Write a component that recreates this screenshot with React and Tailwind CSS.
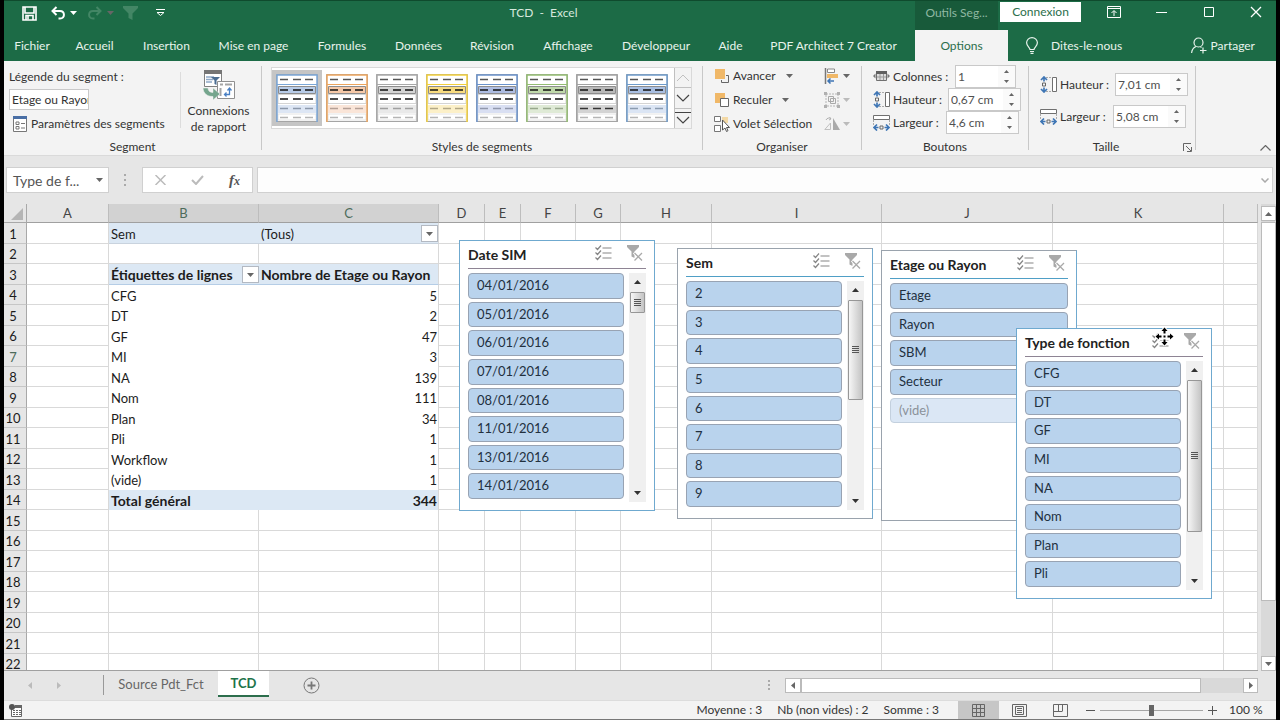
import React from 'react';
import clsx from 'clsx';

const TABS = [
  { name: 'Fichier', width: 'w-[56px]' },
  { name: 'Accueil', width: 'w-[69px]' },
  { name: 'Insertion', width: 'w-[75px]' },
  { name: 'Mise en page', width: 'w-[99px]' },
  { name: 'Formules', width: 'w-[78px]' },
  { name: 'Données', width: 'w-[75px]' },
  { name: 'Révision', width: 'w-[72px]' },
  { name: 'Affichage', width: 'w-[80px]' },
  { name: 'Développeur', width: 'w-[96px]' },
  { name: 'Aide', width: 'w-[53px]' },
  { name: 'PDF Architect 7 Creator', width: 'w-[153px]' },
];

const STYLES = [
  { edge: '#7ba7d7', head: '#b8cce8', soft: '#dde6f4', fourth: '#8d99ab' },
  { edge: '#eda55d', head: '#f6c9a8', soft: '#fae5d8', fourth: '#b5a197' },
  { edge: '#a9a9a9', head: '#d5d5d5', soft: '#e9e9e9', fourth: '#a0a0a0' },
  { edge: '#f2cf3c', head: '#f9dc80', soft: '#fcf0c8', fourth: '#b3a988' },
  { edge: '#6b93cc', head: '#aebde2', soft: '#d9dff2', fourth: '#9299ad' },
  { edge: '#94bd72', head: '#c0d9ab', soft: '#dfead6', fourth: '#98a88d' },
  { edge: '#a3a3a3', head: '#b9b9b9', soft: '#d3d3d3', fourth: '#333333' },
  { edge: '#6f9ccb', head: '#a9bfe2', soft: '#dbe5f4', fourth: '#8b9cb0' },
];

const COLUMNS = [
  { name: 'A', width: 'w-[82px]' },
  { name: 'B', width: 'w-[150px]' },
  { name: 'C', width: 'w-[180px]' },
  { name: 'D', width: 'w-[46px]' },
  { name: 'E', width: 'w-[36px]' },
  { name: 'F', width: 'w-[55px]' },
  { name: 'G', width: 'w-[45px]' },
  { name: 'H', width: 'w-[91px]' },
  { name: 'I', width: 'w-[170px]' },
  { name: 'J', width: 'w-[171px]' },
  { name: 'K', width: 'w-[171px]' },
  { name: '', width: '' },
];

const PIVOT = {
  1: { B: 'Sem', C: '(Tous)' },
  3: { B: 'Étiquettes de lignes', C: 'Nombre de Etage ou Rayon' },
  4: { B: 'CFG', C: '5' },
  5: { B: 'DT', C: '2' },
  6: { B: 'GF', C: '47' },
  7: { B: 'MI', C: '3' },
  8: { B: 'NA', C: '139' },
  9: { B: 'Nom', C: '111' },
  10: { B: 'Plan', C: '34' },
  11: { B: 'Pli', C: '1' },
  12: { B: 'Workflow', C: '1' },
  13: { B: '(vide)', C: '1' },
  14: { B: 'Total général', C: '344' },
};

const ROWS = Array.from({ length: 22 }, (_, i) => i + 1);

/* ---------- small drawings ---------- */

function Caret({ className = 'text-[#666]' }) {
  return (
    <svg width="7" height="4" viewBox="0 0 7 4" className={clsx('shrink-0', className)}>
      <path d="M0 0h7L3.5 4z" fill="currentColor" />
    </svg>
  );
}

function CaretUp({ className = 'text-[#666]' }) {
  return (
    <svg width="7" height="4" viewBox="0 0 7 4" className={clsx('shrink-0', className)}>
      <path d="M0 4h7L3.5 0z" fill="currentColor" />
    </svg>
  );
}

function SaveIcon() {
  return (
    <svg width="15" height="15" viewBox="0 0 15 15" fill="none" stroke="#fff" strokeWidth="1.6">
      <path d="M1 1h13v13H1z" />
      <path d="M3 1v6h9V1M4 14v-4.500h7V14" />
      <path d="M6 10v3.5" />
    </svg>
  );
}

function UndoIcon({ flip, className }) {
  return (
    <svg width="15" height="14" viewBox="0 0 15 14" fill="none" stroke="currentColor" strokeWidth="2" className={clsx(className, flip && '-scale-x-100')}>
      <path d="M5.5 1L1.5 5l4 4" />
      <path d="M1.5 5H9c5 0 5.500 7.500 0 7.500H7.500" />
    </svg>
  );
}

function FunnelIcon({ className }) {
  return (
    <svg width="15" height="14" viewBox="0 0 15 14" className={className}>
      <path d="M0 0h15v2L9.500 7.500V14l-4-2V7.500L0 2z" fill="currentColor" />
    </svg>
  );
}

function ClearFilterIcon() {
  return (
    <svg width="16" height="16" viewBox="0 0 16 16" fill="none">
      <path d="M0 0h12v2L7.500 6.500V13l-3-1.500v-5L0 2z" fill="#a9a9a9" />
      <path d="M7 7.500l8 8M15 7.500l-8 8" stroke="#fff" strokeWidth="3" />
      <path d="M7.500 8l7.500 7.500M15 8l-7.500 7.500" stroke="#a9a9a9" strokeWidth="1.300" />
    </svg>
  );
}

function MultiSelectIcon() {
  return (
    <svg width="17" height="16" viewBox="0 0 17 16" fill="none" stroke="#858585" strokeWidth="1.200">
      <path d="M0.500 2.500l2 2L6 0.500M0.500 7.500l2 2L6 5.500M0.500 12.500l2 2L6 10.500" />
      <path d="M7.500 3H16.500M7.500 8H16.500M7.500 13H16.500" />
    </svg>
  );
}

function MoveCursor() {
  return (
    <svg width="19" height="19" viewBox="0 0 19 19" className="absolute -top-[2px] left-[138px]">
      <path d="M9.500 .5l3 3.500h-2v2.500h-2V4h-2zM9.500 18.500l3-3.500h-2v-2.500h-2V15h-2zM.5 9.500L4 6.500v2h2.500v2H4v2zM18.500 9.500L15 6.500v2h-2.500v2H15v2zM8.500 8.500h2v2h-2z" fill="#000" stroke="#fff" strokeWidth="2" paintOrder="stroke" />
    </svg>
  );
}

function SettingsIcon() {
  return (
    <svg width="14" height="16" viewBox="0 0 14 16" fill="none">
      <path d="M0.500 0.500h13v15H.5z" fill="#fff" stroke="#777" />
      <path d="M0 0h14v3H0z" fill="#4a6fa5" />
      <path d="M3 6h3v2.500H3zM3 10.500h3V13H3z" stroke="#777" />
      <path d="M8 7.500h4M8 12h4" stroke="#777" />
    </svg>
  );
}

function ConnectionsIcon() {
  return (
    <svg width="32" height="31" viewBox="0 0 32 31" fill="none">
      <path d="M1.500 1.500h17v16h-17z" fill="#fff" stroke="#808080" />
      <path d="M1 1h18v4H1z" fill="#757575" />
      <path d="M3 8h8M3 10.500h7M3 13h6" stroke="#8fa9c7" strokeWidth="1.500" />
      <path d="M8 8h9l-3.500 3.500V16l-2-1v-3.500z" fill="#4b6d92" />
      <path d="M14.500 12.500h17v17h-17z" fill="#fff" stroke="#909090" />
      <path d="M17 15.500h3M22 15.500h7M17.500 19v8" stroke="#a5a5a5" strokeWidth="2" />
      <path d="M22 25.500h4.500v-6M24.500 21.500l2-2.500 2 2.500M23.500 23.500l-2 2 2 2" stroke="#4a80c4" strokeWidth="1.300" />
      <path d="M0 19h5c0 3 2 4.500 5 4.500V19l7 6-7 6v-3.500C4 27.500.5 24.500 0 19z" fill="#75a58d" stroke="#f3f3f3" strokeWidth="0.500" />
    </svg>
  );
}

function StyleThumb({ style }) {
  const dashes = (y, color) => <path d={`M4 ${y}h8M17 ${y}h8M29 ${y}h8`} stroke={color} strokeWidth="1.300" />;
  return (
    <svg width="42" height="48" viewBox="0 0 42 48" fill="none">
      <path d="M0.500 0.500h41v47H.5z" fill="#fff" stroke="#a5a5a5" />
      <path d="M1 10.500h40" stroke={style.edge} />
      <path d="M2.500 12.500h37v7h-37z" fill={style.head} stroke="#8d8d8d" />
      <path d="M2 20.500h38v9H2z" stroke="#d4d4d4" />
      <path d="M2 31h38v8H2z" fill={style.soft} />
      <path d="M2 40h38v6H2z" fill="#fff" stroke="#e4e4e4" />
      <path d="M1 48V1h40v47" stroke={style.edge} strokeWidth="1.500" />
      {dashes(5.5, '#555')}
      {dashes(16, '#111')}
      {dashes(25, '#111')}
      {dashes(34.5, style.fourth)}
      {dashes(43.5, '#b5b5b5')}
    </svg>
  );
}

function LayerIcon({ kind }) {
  return (
    <svg width="16" height="16" viewBox="0 0 16 16" fill="none">
      {kind === 'front' && (
        <>
          <path d="M12 7.500h2.500v7h-7V12" stroke="#666" />
          <path d="M1 1h10v10H1z" fill="#f0b868" />
        </>
      )}
      {kind === 'back' && (
        <>
          <path d="M1 1h10v10H1z" fill="#f0b868" />
          <path d="M6.500 6.500h8v8h-8z" fill="#fff" stroke="#666" />
        </>
      )}
      {kind === 'pane' && (
        <>
          <path d="M.5.5h6v5h-6zM.5 9.500h6v6h-6z" fill="#fff" stroke="#777" />
          <path d="M8 1h6v6H8z" fill="#f3d9a6" />
          <path d="M8.500 4v10l2.500-2 1.500 3.500 1.500-.8-1.500-3.200H15.500z" fill="#fff" stroke="#555" />
        </>
      )}
      {kind === 'align' && (
        <>
          <path d="M1.500 0v16" stroke="#777" strokeWidth="1.500" />
          <path d="M3.500 1h7v3.500h-7z" fill="#fff" stroke="#888" />
          <path d="M3 6h11v4H3z" fill="#f0b868" />
          <path d="M10 13H4M6.500 10.500L4 13l2.500 2.500" stroke="#3f76b5" strokeWidth="1.500" />
        </>
      )}
      {kind === 'group' && (
        <>
          <path d="M2 2h12v12H2z" stroke="#b5b5b5" strokeDasharray="2 1" />
          <path d="M4.500 4.500h5v5h-5zM6.500 6.500h5v5h-5z" stroke="#a9a9a9" />
          <path d="M0 0h3v3H0zM13 0h3v3h-3zM0 13h3v3H0zM13 13h3v3h-3z" fill="#b0b0b0" />
        </>
      )}
      {kind === 'rotate' && (
        <>
          <path d="M9 2v12h7z" fill="#a9a9a9" />
          <path d="M6.500 7v6.500H.8z" stroke="#c0c0c0" />
          <path d="M2 4c1-2 3-2.500 5-1.500M5.500 1l1.500 2-2 1" stroke="#b0b0b0" />
        </>
      )}
    </svg>
  );
}

function SizeIcon({ kind }) {
  return (
    <svg width="17" height="17" viewBox="0 0 17 17" fill="none">
      {kind === 'columns' && (
        <>
          <path d="M3.500 3.500h10v9h-10z" fill="#ddd" stroke="#707070" />
          <path d="M3 3h11v3H3z" fill="#606060" />
          <path d="M7 6v6M10.500 6v6M4 9h9" stroke="#999" />
          <path d="M2.500 5.500v5L0 8zM14.500 5.500v5L17 8z" fill="#777" />
        </>
      )}
      {kind === 'height' && (
        <>
          <path d="M6 1.500h5M6 15.500h5" stroke="#aaa" strokeDasharray="2 1" />
          <path d="M12.500 1.500h4v14h-4z" fill="#fff" stroke="#707070" />
          <path d="M2.500 7h3v3h-3z" stroke="#666" />
          <path d="M4 1v4.500M1 4l3-3 3 3M4 16v-4.500M1 13l3 3 3-3" stroke="#3f76b5" strokeWidth="1.700" />
        </>
      )}
      {kind === 'width' && (
        <>
          <path d="M.5 1.500h16v4H.5z" fill="#fff" stroke="#707070" />
          <path d="M.5 6v5M16.500 6v5" stroke="#aaa" strokeDasharray="2 1" />
          <path d="M7 12h3v3H7z" stroke="#666" />
          <path d="M1 13.500h4.500M4 10.500l-3 3 3 3M16 13.500h-4.500M13 10.500l3 3-3 3" stroke="#3f76b5" strokeWidth="1.700" />
        </>
      )}
    </svg>
  );
}

/* ---------- title bar and tabs ---------- */

function TitleBar() {
  return (
    <div className="flex h-[30px] border-t border-[#0f4a2d] text-[#d6e8dd]">
      <div className="flex w-[168px] items-start pt-[5px] pl-[18px]">
        <button aria-label="Enregistrer"><SaveIcon /></button>
        <button aria-label="Annuler" className="ml-[14px] flex items-center gap-[4px] text-white">
          <UndoIcon />
          <Caret className="text-white" />
        </button>
        <button aria-label="Rétablir" className="ml-[10px] flex items-center gap-[5px] text-[#438665]">
          <UndoIcon flip />
          <Caret />
        </button>
        <button aria-label="Filtrer" className="ml-[9px] text-[#438665]"><FunnelIcon /></button>
        <button aria-label="Personnaliser" className="mt-[3px] ml-[18px]">
          <svg width="9" height="8" viewBox="0 0 9 8" fill="none" stroke="#fff">
            <path d="M0 .5h9M1 3.500l3.500 3 3.500-3z" />
          </svg>
        </button>
      </div>
      <div className="flex-1 pt-[3px] text-center leading-[18px] whitespace-pre">TCD  -  Excel</div>
      <div className="w-[83px] bg-[#185a3a] pt-[3px] text-center leading-[18px] text-[#8fb8a2]">Outils Seg...</div>
      <button className="ml-[2px] mt-px h-[20px] w-[81px] bg-white text-[#2c6e4c]">Connexion</button>
      <div className="flex w-[195px] justify-end gap-[34px] pt-[4px] pr-[14px]">
        <button aria-label="Options d'affichage du ruban" className="mr-px h-[13px]">
          <svg width="14" height="12" viewBox="0 0 14 12" fill="none" stroke="#fff">
            <path d="M.5.500h13v11H.5zM.5 2.500h13M7 10V5M4.500 7L7 4.500 9.500 7" />
          </svg>
        </button>
        <button aria-label="Réduire" className="mr-px h-[13px]">
          <svg width="12" height="12" viewBox="0 0 12 12" stroke="#fff"><path d="M0 6.500h11" /></svg>
        </button>
        <button aria-label="Agrandir" className="mr-px h-[13px]">
          <svg width="12" height="12" viewBox="0 0 12 12" fill="none" stroke="#fff"><path d="M1.500 1.500h9v9h-9z" /></svg>
        </button>
        <button aria-label="Fermer" className="h-[13px]">
          <svg width="12" height="12" viewBox="0 0 12 12" stroke="#fff" strokeWidth="1.300"><path d="M1 1l10 10M11 1L1 11" /></svg>
        </button>
      </div>
    </div>
  );
}

function TabStrip() {
  return (
    <nav className="flex h-[31px] text-[#e8f3ec]">
      {TABS.map((tab) => (
        <button key={tab.name} className={clsx('shrink-0 whitespace-nowrap', tab.width)}>{tab.name}</button>
      ))}
      <button className="ml-[5px] w-[93px] shrink-0 bg-[#f3f3f3] text-[#2c6e4c]">Options</button>
      <button className="ml-[18px] flex items-center gap-[13px]">
        <svg width="12" height="17" viewBox="0 0 12 17" fill="none" stroke="#e8f3ec" strokeWidth="1.200">
          <path d="M4 12.500c0-2-3.400-3.200-3.400-6.700a5.400 5.200 0 0110.800 0c0 3.500-3.400 4.700-3.400 6.700zM4 14.500h4M4.500 16.400h3" />
        </svg>
        Dites-le-nous
      </button>
      <div className="flex-1" />
      <button className="mr-[21px] flex items-center gap-1">
        <svg width="16" height="17" viewBox="0 0 16 17" fill="none" stroke="#e8f3ec" strokeWidth="1.200">
          <circle cx="7.500" cy="5.500" r="4.500" />
          <path d="M.6 16c.3-3.500 2-5.500 4.400-6.500M9.500 10l1 .5M12 10.500v6M9 13.500h6.500" />
        </svg>
        Partager
      </button>
    </nav>
  );
}

/* ---------- ribbon ---------- */

function Group({ title, width, launcher, children }) {
  return (
    <>
      <section className={clsx('flex shrink-0 flex-col', width)}>
        <div className="flex h-[78px]">{children}</div>
        <div className="flex h-4 items-center">
          <h2 className="flex-1 text-center leading-4">{title}</h2>
          {launcher && (
            <button aria-label={`Options ${title}`} className="mr-[3px]">
              <svg width="9" height="9" viewBox="0 0 9 9" fill="none" stroke="#666">
                <path d="M.5 8V.500H8M3 3l5 5M8.500 4v4.500H4" />
              </svg>
            </button>
          )}
        </div>
      </section>
      <div className="my-[5px] w-px shrink-0 bg-[#c8c8c8]" />
    </>
  );
}

function Spin({ id, icon, label, labelWidth, value, width }) {
  return (
    <div className="flex items-center">
      <SizeIcon kind={icon} />
      <label htmlFor={id} className={clsx('ml-[3px] shrink-0 whitespace-nowrap', labelWidth)}>{label}</label>
      <div className={clsx('flex h-[23px] shrink-0 border border-[#c9c9c9] bg-white', width)}>
        <input id={id} defaultValue={value} className="min-w-0 flex-1 pl-[2px] text-[#505050] outline-none" />
        <div className="flex w-[17px] flex-col items-center justify-between bg-[#fafafa] py-[4px]">
          <button aria-label="Augmenter" className="flex"><svg width="5" height="3" viewBox="0 0 5 3"><path d="M0 3h5L2.500 0z" fill="#666" /></svg></button>
          <button aria-label="Diminuer" className="flex"><svg width="5" height="3" viewBox="0 0 5 3"><path d="M0 0h5L2.500 3z" fill="#666" /></svg></button>
        </div>
      </div>
    </div>
  );
}

function Ribbon() {
  return (
    <div className="flex h-[94px] bg-[#f3f3f3] text-[#333]">
      <Group title="Segment" width="w-[257px]">
        <div className="flex w-[176px] flex-col items-start pt-[7px] pl-[5px]">
          <label htmlFor="legende" className="leading-[18px]">Légende du segment :</label>
          <input id="legende" defaultValue="Etage ou Rayon" className="mt-[3px] h-[21px] w-[80px] border border-[#c9c9c9] bg-white pr-0 pl-[2px] outline-none" />
          <button className="mt-[5px] ml-1 flex items-center gap-1 leading-[18px] whitespace-nowrap"><SettingsIcon />Paramètres des segments</button>
        </div>
        <div className="mt-[11px] h-[56px] w-px bg-[#dcdcdc]" />
        <button className="flex flex-1 flex-col items-center pt-[8px] pr-[5px] leading-4">
          <ConnectionsIcon />
          <span className="mt-[3px]">Connexions</span>
          <span>de rapport</span>
        </button>
      </Group>

      <Group title="Styles de segments" width="w-[440px]">
        <div className="mt-[6px] ml-[9px] flex h-[62px] w-[421px] border border-[#d9d9d9] bg-white">
          {STYLES.map((style, i) => (
            <button key={i} aria-label={`Style ${i + 1}`} className={clsx('mt-[2px] flex h-[56px] w-[50px] items-center justify-center', i === 0 && 'bg-[#c5c5c5]')}>
              <StyleThumb style={style} />
            </button>
          ))}
          <div className="ml-auto flex w-[17px] flex-col divide-y divide-[#c0c0c0] border-l border-[#c0c0c0] bg-[#f3f3f3]">
            <button aria-label="Précédent" className="flex flex-1 items-center justify-center">
              <svg width="14" height="8" viewBox="0 0 14 8" fill="none" stroke="#c0c0c0"><path d="M1 7l6-6 6 6" /></svg>
            </button>
            <button aria-label="Suivant" className="flex flex-1 items-center justify-center">
              <svg width="14" height="8" viewBox="0 0 14 8" fill="none" stroke="#444" strokeWidth="1.200"><path d="M1 1l6 6 6-6" /></svg>
            </button>
            <button aria-label="Autres" className="flex flex-1 items-center justify-center">
              <svg width="16" height="14" viewBox="0 0 16 14" fill="none" stroke="#444" strokeWidth="1.200"><path d="M0 1.500h16M2 6l6 6 6-6" /></svg>
            </button>
          </div>
        </div>
      </Group>

      <Group title="Organiser" width="w-[158px]">
        <div className="flex w-[121px] flex-col items-start justify-between pt-[6px] pb-[6px] pl-[11px] leading-[18px] whitespace-nowrap">
          <button className="flex items-center gap-[3px]"><LayerIcon kind="front" />Avancer<Caret className="ml-[7px] text-[#666]" /></button>
          <button className="flex items-center gap-[3px]"><LayerIcon kind="back" />Reculer<Caret className="ml-[7px] text-[#666]" /></button>
          <button className="flex items-center gap-[3px]"><LayerIcon kind="pane" />Volet Sélection</button>
        </div>
        <div className="flex flex-col items-start justify-between pt-[6px] pb-[6px]">
          <button aria-label="Aligner" className="flex h-[18px] items-center gap-[3px]"><LayerIcon kind="align" /><Caret /></button>
          <button aria-label="Grouper" className="flex h-[18px] items-center gap-[3px]"><LayerIcon kind="group" /><Caret className="text-[#bbb]" /></button>
          <button aria-label="Rotation" className="flex h-[18px] items-center gap-[3px]"><LayerIcon kind="rotate" /><Caret className="text-[#bbb]" /></button>
        </div>
      </Group>

      <Group title="Boutons" width="w-[166px]">
        <div className="flex flex-col pt-[4px] pl-[11px]">
          <Spin id="colonnes" icon="columns" label="Colonnes :" labelWidth="w-[62px]" value="1" width="w-[61px]" />
          <Spin id="bouton-hauteur" icon="height" label="Hauteur :" labelWidth="w-[55px]" value="0,67 cm" width="w-[73px]" />
          <Spin id="bouton-largeur" icon="width" label="Largeur :" labelWidth="w-[53px]" value="4,6 cm" width="w-[73px]" />
        </div>
      </Group>

      <Group title="Taille" width="w-[166px]" launcher>
        <div className="flex flex-col gap-[9px] pt-[12px] pl-[11px]">
          <Spin id="hauteur" icon="height" label="Hauteur :" labelWidth="w-[55px]" value="7,01 cm" width="w-[73px]" />
          <Spin id="largeur" icon="width" label="Largeur :" labelWidth="w-[53px]" value="5,08 cm" width="w-[73px]" />
        </div>
      </Group>

      <div className="flex flex-1 items-end justify-end pr-[5px] pb-[4px]">
        <button aria-label="Réduire le ruban">
          <svg width="11" height="6" viewBox="0 0 11 6" fill="none" stroke="#666" strokeWidth="1.200"><path d="M.5 5.500l5-5 5 5" /></svg>
        </button>
      </div>
    </div>
  );
}

function FormulaBar() {
  return (
    <div className="flex h-[49px] items-center border-t border-[#dadada] pr-[3px] pl-[2px]">
      <button className="flex h-[26px] w-[103px] items-center justify-between border border-[#d0d0d0] bg-white pr-[5px] pl-[6px] text-[14px] text-[#555]">
        Type de f...
        <Caret />
      </button>
      <svg width="3" height="12" viewBox="0 0 3 12" className="ml-[15px]" fill="#aaa"><path d="M0 0h2v2H0zM0 5h2v2H0zM0 10h2v2H0z" /></svg>
      <div className="ml-[15px] flex h-[26px] w-[111px] items-center justify-between border border-[#d0d0d0] bg-white pr-[12px] pl-[12px]">
        <button aria-label="Annuler la saisie">
          <svg width="11" height="10" viewBox="0 0 11 10" stroke="#bbb" strokeWidth="1.500"><path d="M.5 0l10 10M10.500 0l-10 10" /></svg>
        </button>
        <button aria-label="Entrer">
          <svg width="13" height="10" viewBox="0 0 13 10" fill="none" stroke="#bbb" strokeWidth="2"><path d="M1 5l4 4 7-8" /></svg>
        </button>
        <button className="font-['Liberation_Serif',serif] text-[15px] font-bold text-[#555] italic">f<span className="text-[12px]">x</span></button>
      </div>
      <div className="ml-1 flex h-[26px] flex-1 items-center border border-[#d0d0d0] bg-[#fdfdfd] pr-[3px]">
        <input aria-label="Barre de formule" className="min-w-0 flex-1 outline-none" />
        <svg width="8" height="5" viewBox="0 0 8 5" fill="none" stroke="#aaa" strokeWidth="1.500"><path d="M.5.5l3.500 3.500L7.500.5" /></svg>
      </div>
    </div>
  );
}

/* ---------- sheet ---------- */

function FilterButton({ label }) {
  return (
    <button aria-label={label} className="flex size-[17px] shrink-0 items-center justify-center border border-[#b3b9c2] bg-white">
      <Caret />
    </button>
  );
}

function cellStyle(row, col) {
  const pivot = col === 'B' || col === 'C';
  if (!pivot || row > 14 || row === 2) return 'border-r border-b border-[#d9d9d9]';
  const edge = col === 'C' ? 'border-r border-r-[#d9d9d9]' : '';
  if (row === 1) return clsx(edge, 'border-b border-b-[#c9d3de] bg-[#dce8f4]');
  if (row === 3) return clsx(edge, 'border-b border-b-[#b5cde6] bg-[#dce8f4] text-[14px] font-bold');
  if (row === 14) return clsx(edge, 'bg-[#dce8f4] text-[14px] font-bold');
  return edge;
}

function PivotCell({ row, col }) {
  const text = PIVOT[row]?.[col];
  if (!text) return null;
  if (row === 1 && col === 'C') {
    return <div className="flex h-[18px] items-center justify-between">{text}<FilterButton label="Filtrer Sem" /></div>;
  }
  if (row === 3 && col === 'B') {
    return <div className="flex h-[18px] items-center justify-between">{text}<FilterButton label="Filtrer les lignes" /></div>;
  }
  return <div className={clsx(col === 'C' && row > 3 && 'pr-px text-right')}>{text}</div>;
}

function Sheet() {
  return (
    <table className="w-full table-fixed border-separate border-spacing-0 text-[13px] leading-[18px] text-[#1c1c1c]">
      <thead>
        <tr className="h-[19px] text-[#444]">
          <th aria-label="Tout sélectionner" className="w-[23px] border-r border-b border-[#a8a8a8] p-0">
            <svg width="12" height="12" viewBox="0 0 12 12" className="mt-[2px] ml-[7px]"><path d="M12 0v12H0z" fill="#b5b5b5" /></svg>
          </th>
          {COLUMNS.map(({ name, width }, i) => (
            <th key={i} className={clsx('border-r border-b border-r-[#bdbdbd] border-b-[#a0a0a0] p-0 text-center font-normal', width, (name === 'B' || name === 'C') && 'bg-[#d2d2d2] text-[#4d6b5b]')}>
              {name}
            </th>
          ))}
        </tr>
      </thead>
      <tbody className="bg-white">
        {ROWS.map((row) => (
          <tr key={row} className="h-[20px] odd:h-[21px]">
            <th className={clsx('border-r border-b border-r-[#a8a8a8] border-b-[#c6c6c6] bg-[#e6e6e6] p-0 pt-px pr-[4px] text-center font-normal', row === 7 && 'text-[#4d6b5b]')}>{row}</th>
            {COLUMNS.map(({ name }, i) => (
              <td key={i} className={clsx('overflow-hidden p-0 pt-px whitespace-nowrap', (name === 'B' || name === 'C') && 'pl-[2px]', cellStyle(row, name))}>
                <PivotCell row={row} col={name} />
              </td>
            ))}
          </tr>
        ))}
      </tbody>
    </table>
  );
}

function Slicer({ title, items, faded, place, edge, rule, thumb, cursor }) {
  return (
    <section className={clsx('absolute h-[271px] w-[196px] border bg-white px-2 text-[13px]', place, edge)}>
      <header className={clsx('flex h-[28px] items-center border-b', rule)}>
        <h3 className="flex-1 text-[14px] font-bold text-[#222]">{title}</h3>
        <button aria-label="Sélection multiple" className="mb-[4px]"><MultiSelectIcon /></button>
        <button aria-label="Effacer le filtre" className="mr-[3px] mb-[3px] ml-[15px]"><ClearFilterIcon /></button>
      </header>
      <div className="mt-[4px] flex gap-[5px]">
        <div className="grid h-[226px] flex-1 grid-rows-8 gap-y-[3px]">
          {items.map((item) => (
            <button key={item} className={clsx('rounded-[4px] border pl-[8px] text-left', item === faded ? 'border-[#c3d0de] bg-[#dbe7f5] text-[#8b929a]' : 'border-[#98a3b3] bg-[#b9d3ed] text-[#22303f]')}>
              {item}
            </button>
          ))}
        </div>
        {thumb && (
          <div className="flex h-[229px] w-[17px] flex-col items-center bg-[#f0f0f0] pt-[7px] pb-[7px]">
            <CaretUp className="text-[#333]" />
            <div className={clsx('mt-[8px] flex w-[15px] items-center justify-center rounded-[1px] border border-[#979797] bg-linear-to-r from-[#f6f6f6] to-[#c4c4c4]', thumb)}>
              <svg width="7" height="8" viewBox="0 0 7 8" stroke="#555"><path d="M0 .5h7M0 2.500h7M0 4.500h7M0 6.500h7" /></svg>
            </div>
            <Caret className="mt-auto text-[#333]" />
          </div>
        )}
      </div>
      {cursor && <MoveCursor />}
    </section>
  );
}

function Slicers() {
  return (
    <>
      <Slicer
        title="Date SIM"
        items={['04/01/2016', '05/01/2016', '06/01/2016', '07/01/2016', '08/01/2016', '11/01/2016', '13/01/2016', '14/01/2016']}
        place="top-[36px] left-[455px]" edge="border-[#6fa9cf]" rule="border-[#8e8494]" thumb="h-[21px]"
      />
      <Slicer
        title="Sem"
        items={['2', '3', '4', '5', '6', '7', '8', '9']}
        place="top-[44px] left-[673px]" edge="border-[#9aa3ad] border-r-[#6fa9cf]" rule="border-[#4f9fc6]" thumb="h-[100px]"
      />
      <Slicer
        title="Etage ou Rayon"
        items={['Etage', 'Rayon', 'SBM', 'Secteur', '(vide)']}
        faded="(vide)"
        place="top-[46px] left-[877px]" edge="border-[#9aa3ad] border-r-[#6fa9cf]" rule="border-[#4f9fc6]"
      />
      <Slicer
        title="Type de fonction"
        items={['CFG', 'DT', 'GF', 'MI', 'NA', 'Nom', 'Plan', 'Pli']}
        place="top-[124px] left-[1012px]" edge="border-[#6fa9cf]" rule="border-[#8e8494]" thumb="h-[152px]" cursor
      />
    </>
  );
}

function VerticalScroll() {
  return (
    <div className="ml-[3px] flex w-[15px] shrink-0 flex-col bg-[#d9d9d9] pt-[2px]">
      <button aria-label="Défiler vers le haut" className="flex h-[15px] items-center justify-center border border-[#bbb] bg-white"><CaretUp /></button>
      <div className="mt-px flex-[380] border border-[#bbb] bg-white" />
      <div className="flex-[56]" />
      <button aria-label="Défiler vers le bas" className="flex h-[15px] items-center justify-center border border-[#bbb] bg-white"><Caret /></button>
    </div>
  );
}

function SheetTabs() {
  return (
    <div className="flex h-[29px] items-start pr-[18px]">
      <div className="flex h-[28px] w-[99px] items-center gap-[25px] pl-[24px]">
        <svg width="4" height="7" viewBox="0 0 4 7"><path d="M4 0v7L0 3.500z" fill="#bbb" /></svg>
        <svg width="4" height="7" viewBox="0 0 4 7"><path d="M0 0v7l4-3.500z" fill="#bbb" /></svg>
      </div>
      <div className="mt-[4px] h-[20px] w-px bg-[#999]" />
      <button className="h-[28px] w-[114px] text-[13px] text-[#666]">Source Pdt_Fct</button>
      <button className="h-[26px] w-[51px] border-b-2 border-[#2c6e4c] bg-white pt-[2px] text-[13px] font-bold text-[#20734a]">TCD</button>
      <button aria-label="Nouvelle feuille" className="mt-[6px] ml-[34px]">
        <svg width="17" height="17" viewBox="0 0 17 17" fill="none" stroke="#777"><circle cx="8.500" cy="8.500" r="7.500" /><path d="M8.500 4.500v8M4.500 8.500h8" strokeWidth="1.800" /></svg>
      </button>
      <div className="flex-1" />
      <svg width="2" height="11" viewBox="0 0 2 11" className="mt-[9px] mr-[15px]" fill="#aaa"><path d="M0 0h2v2H0zM0 4h2v2H0zM0 8h2v2H0z" /></svg>
      <div className="mt-[7px] flex h-[15px] w-[473px] bg-[#d9d9d9]">
        <button aria-label="Défiler à gauche" className="flex w-[16px] items-center justify-center border border-[#bbb] bg-white">
          <svg width="4" height="7" viewBox="0 0 4 7"><path d="M4 0v7L0 3.500z" fill="#666" /></svg>
        </button>
        <div className="w-[400px] border border-[#bbb] bg-white" />
        <button aria-label="Défiler à droite" className="ml-auto flex w-[15px] items-center justify-center border border-[#bbb] bg-white">
          <svg width="4" height="7" viewBox="0 0 4 7"><path d="M0 0v7l4-3.500z" fill="#666" /></svg>
        </button>
      </div>
    </div>
  );
}

function StatusBar() {
  return (
    <footer className="flex h-[20px] items-center border-t border-b border-[#dcdcdc] border-b-[#777] bg-[#f3f3f3] pr-[16px] text-[#333]">
      <button aria-label="Enregistrer une macro" className="ml-[5px]">
        <svg width="14" height="13" viewBox="0 0 14 13" fill="none">
          <path d="M2.500 3.500h10v9h-10z" fill="#fff" stroke="#666" />
          <path d="M6 1h7v3H6z" fill="#666" />
          <path d="M4 6.500h2M7 6.500h2M10 6.500h2M4 8.500h2M7 8.500h2M10 8.500h2M4 10.500h2M7 10.500h2M10 10.500h2" stroke="#666" />
          <circle cx="3" cy="3" r="3" fill="#555" />
        </svg>
      </button>
      <div className="flex-1" />
      <span>Moyenne : 3</span>
      <span className="ml-[15px]">Nb (non vides) : 2</span>
      <span className="ml-[15px]">Somme : 3</span>
      <button aria-label="Normal" className="ml-[19px] flex h-full w-[41px] items-center justify-center bg-[#c6c6c6]">
        <svg width="13" height="13" viewBox="0 0 13 13" fill="none" stroke="#666"><path d="M.5.5h12v12H.5zM4.500 0v13M8.500 0v13M0 4.500h13M0 8.500h13" /></svg>
      </button>
      <button aria-label="Mise en page" className="flex w-[41px] justify-center">
        <svg width="15" height="13" viewBox="0 0 15 13" fill="none" stroke="#666"><path d="M.5.5h14v12H.5zM3.500 2.500h8v8h-8zM5 4.500h5M5 6.500h5M5 8.500h5" /></svg>
      </button>
      <button aria-label="Aperçu des sauts de page" className="flex w-[41px] justify-center">
        <svg width="15" height="13" viewBox="0 0 15 13" fill="none" stroke="#666"><path d="M.5.5h14v12H.5zM5.500 1v6M9.500 1v6M1 7.500h8.500" /></svg>
      </button>
      <button aria-label="Zoom arrière" className="ml-[5px]"><svg width="9" height="9" viewBox="0 0 9 9" stroke="#555"><path d="M0 4.500h9" /></svg></button>
      <input
        type="range" aria-label="Zoom" min="0" max="200" defaultValue="100"
        className="mx-[5px] h-[12px] w-[103px] appearance-none bg-[linear-gradient(#a5a5a5,#a5a5a5)] bg-[length:100%_1px] bg-center bg-no-repeat [&::-webkit-slider-thumb]:h-[11px] [&::-webkit-slider-thumb]:w-[5px] [&::-webkit-slider-thumb]:appearance-none [&::-webkit-slider-thumb]:bg-[#666]"
      />
      <button aria-label="Zoom avant"><svg width="9" height="9" viewBox="0 0 9 9" stroke="#555"><path d="M0 4.500h9M4.500 0v9" /></svg></button>
      <button className="ml-3 w-[31px] text-right whitespace-nowrap">100 %</button>
    </footer>
  );
}

export default function App() {
  return (
    <div className="flex h-screen w-full flex-col overflow-hidden border-x-4 border-black bg-[#e6e6e6] font-['Lato','Open_Sans',sans-serif] text-[12px]">
      <header className="bg-[#1c6b46]">
        <TitleBar />
        <TabStrip />
      </header>
      <Ribbon />
      <FormulaBar />
      <main className="flex min-h-0 flex-1">
        <div className="relative min-w-0 flex-1 overflow-hidden border-b border-[#a0a0a0]">
          <Sheet />
          <Slicers />
        </div>
        <VerticalScroll />
      </main>
      <SheetTabs />
      <StatusBar />
    </div>
  );
}
